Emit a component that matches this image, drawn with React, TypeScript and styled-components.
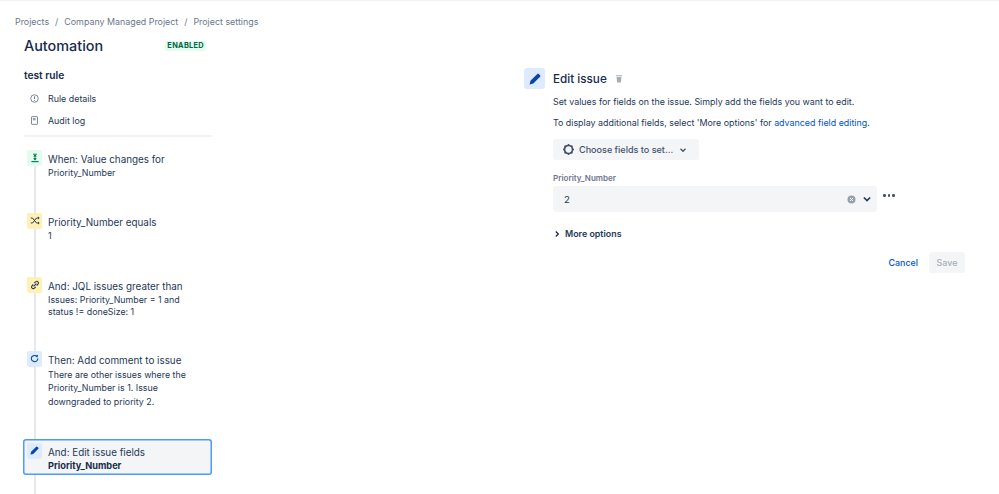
import React from "react";
import styled, { createGlobalStyle } from "styled-components";

const GlobalStyle = createGlobalStyle`
  html, body {
    margin: 0;
    padding: 0;
    background: #fff;
    font-family: Inter, "Liberation Sans", sans-serif;
    color: #253858;
  }
`;

const Page = styled.div`
  width: 999px;
  height: 494px;
  overflow: hidden;
  box-sizing: border-box;
  border-top: 1px solid #f1f2f4;
`;

const Breadcrumbs = styled.nav`
  display: flex;
  gap: 6px;
  padding: 14px 0 0 15px;
  height: 13px;
  font-size: 8.9px;
  line-height: 13px;
  color: #6b778c;
`;

const Columns = styled.div`
  display: flex;
`;

const Sidebar = styled.aside`
  width: 188px;
  margin-left: 24px;
  flex: none;
`;

const TitleRow = styled.div`
  display: flex;
  align-items: center;
  justify-content: space-between;
  width: 182px;
  height: 22px;
  margin-top: 6px;
`;

const Title = styled.h1`
  margin: 0;
  font-size: 14.4px;
  font-weight: 500;
  color: #172b4d;
`;

const Badge = styled.span`
  margin-top: 2px;
  background: #e3fcef;
  color: #006644;
  font-size: 7.4px;
  font-weight: 700;
  letter-spacing: 0.3px;
  line-height: 10px;
  padding: 0 2px;
  border-radius: 2px;
`;

const RuleName = styled.h2`
  margin: 12px 0 0;
  font-size: 10.2px;
  line-height: 14px;
  font-weight: 600;
  color: #172b4d;
`;

const NavList = styled.div`
  display: flex;
  flex-direction: column;
  gap: 8px;
  margin-top: 9px;
  padding-bottom: 8px;
  border-bottom: 2px solid #f1f2f4;
`;

const NavItem = styled.div`
  display: flex;
  align-items: center;
  gap: 9px;
  padding-left: 6px;
  height: 14px;
  font-size: 8.9px;
  color: #253858;

  svg {
    flex: none;
  }
`;

const Timeline = styled.div`
  position: relative;
  margin-top: 9px;

  &::before {
    content: "";
    position: absolute;
    left: 10px;
    top: 19px;
    height: 400px;
    width: 1.5px;
    background: #e6e8ee;
  }
`;

const Step = styled.div<{ $height: number; $selected?: boolean }>`
  position: relative;
  display: flex;
  gap: 6px;
  box-sizing: border-box;
  height: ${(p) => p.$height}px;
  margin-left: -1px;
  padding: 4px;
  border-radius: 3px;
  ${(p) =>
    p.$selected &&
    `
    background: #f4f5f7;
    box-shadow: inset 0 0 0 1.5px #4c9aff;
  `}
`;

const StepIcon = styled.span<{ $bg: string }>`
  display: flex;
  align-items: center;
  justify-content: center;
  flex: none;
  width: 15px;
  height: 15.5px;
  border-radius: 2px;
  background: ${(p) => p.$bg};
`;

const StepBody = styled.div`
  min-width: 0;
  max-width: 145px;
  padding-top: 1.5px;
`;

const StepTitle = styled.div`
  font-size: 9.85px;
  line-height: 15px;
  color: #253858;
`;

const StepText = styled.div<{ $bold?: boolean; $lh?: number }>`
  font-size: ${(p) => (p.$bold ? 9.2 : 8.85)}px;
  line-height: ${(p) => p.$lh ?? 12}px;
  font-weight: ${(p) => (p.$bold ? 700 : 400)};
  color: ${(p) => (p.$bold ? "#172b4d" : "#253858")};
`;

const Panel = styled.main`
  width: 441px;
  margin-left: 312px;
  padding-top: 40px;
  flex: none;
`;

const PanelHeader = styled.div`
  display: flex;
  align-items: center;
  height: 21px;
`;

const PanelIcon = styled.span`
  display: flex;
  align-items: center;
  justify-content: center;
  width: 21px;
  height: 21px;
  border-radius: 3px;
  background: #deebff;
  margin-right: 8px;
`;

const PanelTitle = styled.h2`
  margin: 0 8px 0 0;
  font-size: 11.7px;
  font-weight: 500;
  color: #172b4d;
`;

const PanelBody = styled.div`
  padding-left: 29px;
`;

const Help = styled.p`
  margin: 6px 0 0;
  font-size: 8.88px;
  line-height: 14px;
  color: #253858;

  & + & {
    margin-top: 7px;
  }
`;

const HelpLink = styled.a`
  color: #0052cc;
`;

const ChooseButton = styled.button`
  display: flex;
  align-items: center;
  gap: 4px;
  height: 21px;
  width: 146px;
  margin-top: 9px;
  padding: 0 0 0 9px;
  border: 0;
  border-radius: 3px;
  background: #f4f5f7;
  color: #42526e;
  font: 500 9.05px Inter, "Liberation Sans", sans-serif;
`;

const ButtonChevron = styled.span`
  display: flex;
  margin-left: 2px;
`;

const FieldLabel = styled.label`
  display: block;
  margin-top: 13px;
  font-size: 8px;
  line-height: 11px;
  font-weight: 600;
  color: #6b778c;
`;

const FieldRow = styled.div`
  display: flex;
  align-items: flex-start;
  gap: 6px;
  margin-top: 2px;
`;

const Select = styled.div`
  display: flex;
  align-items: center;
  gap: 6px;
  width: 324px;
  height: 26px;
  box-sizing: border-box;
  padding: 0 5px 0 11px;
  border-radius: 3px;
  background: #f4f5f7;
  font-size: 9.6px;
  color: #253858;
`;

const SelectValue = styled.span`
  flex: 1;
`;

const More = styled.span`
  display: flex;
  gap: 2px;
  margin-top: 8px;
`;

const Dot = styled.i`
  width: 2.6px;
  height: 2.6px;
  border-radius: 50%;
  background: #42526e;
`;

const MoreOptions = styled.div`
  display: flex;
  align-items: center;
  gap: 4px;
  margin-top: 15px;
  font-size: 8.9px;
  line-height: 13px;
  font-weight: 600;
  color: #253858;
`;

const Actions = styled.div`
  display: flex;
  align-items: center;
  justify-content: flex-end;
  gap: 11px;
  margin-top: 12px;
`;

const CancelButton = styled.button`
  border: 0;
  padding: 0;
  background: none;
  color: #0052cc;
  font: 500 8.9px Inter, "Liberation Sans", sans-serif;
`;

const SaveButton = styled.button`
  width: 36px;
  height: 21px;
  border: 0;
  padding: 0;
  border-radius: 3px;
  background: #f4f5f7;
  color: #a5adba;
  font: 500 8.9px Inter, "Liberation Sans", sans-serif;
`;

const PencilIcon = ({ size = 9 }: { size?: number }) => (
  <svg width={size} height={size} viewBox="0 0 12 12">
    <path
      fill="#0747a6"
      d="M8.3.9a1 1 0 0 1 1.4 0l1.4 1.4a1 1 0 0 1 0 1.4L4.3 10.5.6 11.4l.9-3.7z"
    />
  </svg>
);

const Chevron = ({ dir = "down", size = 8, color = "#42526e" }: { dir?: "down" | "right"; size?: number; color?: string }) => (
  <svg width={size} height={size} viewBox="0 0 8 8">
    <path
      d={dir === "down" ? "M1.5 2.8 4 5.3l2.5-2.5" : "M2.8 1.5 5.3 4 2.8 6.5"}
      fill="none"
      stroke={color}
      strokeWidth="1.3"
    />
  </svg>
);

export default function App() {
  return (
    <Page>
      <GlobalStyle />
      <Breadcrumbs>
        <span>Projects</span>
        <span>/</span>
        <span>Company Managed Project</span>
        <span>/</span>
        <span>Project settings</span>
      </Breadcrumbs>
      <Columns>
        <Sidebar>
          <TitleRow>
            <Title>Automation</Title>
            <Badge>ENABLED</Badge>
          </TitleRow>
          <RuleName>test rule</RuleName>
          <NavList>
            <NavItem>
              <svg width="9" height="9" viewBox="0 0 10 10">
                <circle cx="5" cy="5" r="4.2" fill="none" stroke="#5e6c84" strokeWidth="0.9" />
                <path d="M5 2.6v3M5 6.7v.8" stroke="#5e6c84" strokeWidth="1" />
              </svg>
              Rule details
            </NavItem>
            <NavItem>
              <svg width="9" height="9" viewBox="0 0 10 10">
                <rect x="1.7" y="0.7" width="6.6" height="8.6" rx="0.6" fill="none" stroke="#5e6c84" strokeWidth="0.9" />
                <path d="M3.2 2.2h3v2.6h-3z" fill="#97a0af" />
              </svg>
              Audit log
            </NavItem>
          </NavList>
          <Timeline>
            <Step $height={63}>
              <StepIcon $bg="#e3fcef">
                <svg width="10" height="10" viewBox="0 0 10 10">
                  <path d="M3 1.2h4M5 1.2v6" fill="none" stroke="#00875a" strokeWidth="0.9" />
                  <path d="M3.2 3.6h3.6L5 1.6zM3.2 5.2h3.6L5 7.2z" fill="#006644" />
                  <path d="M1.4 8.6h7.2" stroke="#00875a" strokeWidth="1.2" />
                </svg>
              </StepIcon>
              <StepBody>
                <StepTitle>When: Value changes for</StepTitle>
                <StepText>Priority_Number</StepText>
              </StepBody>
            </Step>
            <Step $height={64}>
              <StepIcon $bg="#fff0b3">
                <svg width="10" height="9" viewBox="0 0 10 9">
                  <path d="M.8 2h1.7l4 5h1.7M.8 7h1.7l4-5h1.7" fill="none" stroke="#253858" strokeWidth="1" />
                  <path d="M8 .6 9.6 2 8 3.4zM8 5.6 9.6 7 8 8.4z" fill="#253858" />
                </svg>
              </StepIcon>
              <StepBody>
                <StepTitle>Priority_Number equals</StepTitle>
                <StepText>1</StepText>
              </StepBody>
            </Step>
            <Step $height={74}>
              <StepIcon $bg="#fff0b3">
                <svg width="10" height="10" viewBox="0 0 10 10">
                  <path d="M4.2 3.2 5.6 1.9a1.6 1.6 0 0 1 2.4 2.3L6.7 5.5M5.8 6.8 4.4 8.1A1.6 1.6 0 0 1 2 5.8l1.3-1.3M3.6 6.4l2.8-2.8" fill="none" stroke="#253858" strokeWidth="1.1" />
                </svg>
              </StepIcon>
              <StepBody>
                <StepTitle>And: JQL issues greater than</StepTitle>
                <StepText>Issues: Priority_Number = 1 and status != doneSize: 1</StepText>
              </StepBody>
            </Step>
            <Step $height={92}>
              <StepIcon $bg="#deebff">
                <svg width="9" height="9" viewBox="0 0 10 10">
                  <path d="M8.3 3.6A3.6 3.4 0 1 0 7.9 7.2 3.6 3.4 0 0 0 8.7 5" fill="none" stroke="#0747a6" strokeWidth="1.2" />
                  <path d="M7.4 1.2h1.5v1.5H7.4z" fill="#0747a6" />
                </svg>
              </StepIcon>
              <StepBody>
                <StepTitle>Then: Add comment to issue</StepTitle>
                <StepText $lh={13.5}>There are other issues where the Priority_Number is 1. Issue downgraded to priority 2.</StepText>
              </StepBody>
            </Step>
            <Step $height={36} $selected>
              <StepIcon $bg="#deebff">
                <PencilIcon />
              </StepIcon>
              <StepBody>
                <StepTitle>And: Edit issue fields</StepTitle>
                <StepText $bold>Priority_Number</StepText>
              </StepBody>
            </Step>
          </Timeline>
        </Sidebar>
        <Panel>
          <PanelHeader>
            <PanelIcon>
              <PencilIcon size={12} />
            </PanelIcon>
            <PanelTitle>Edit issue</PanelTitle>
            <svg width="8" height="9" viewBox="0 0 9 9">
              <path d="M1 .8h7v1.2H1zM1.8 2.8h5.4l-.5 5.6a.5.5 0 0 1-.5.5H2.8a.5.5 0 0 1-.5-.5z" fill="#a5adba" />
            </svg>
          </PanelHeader>
          <PanelBody>
            <Help>Set values for fields on the issue. Simply add the fields you want to edit.</Help>
            <Help>
              To display additional fields, select 'More options' for <HelpLink>advanced field editing</HelpLink>.
            </Help>
            <ChooseButton>
              <svg width="13" height="13" viewBox="0 0 13 13">
                <circle cx="6.5" cy="6.5" r="4" fill="none" stroke="#42526e" strokeWidth="1.7" />
                <path d="M6.5 1v1.6M6.5 10.4V12M1 6.5h1.6M10.4 6.5H12M2.6 2.6l1.1 1.1M9.3 9.3l1.1 1.1M2.6 10.4l1.1-1.1M9.3 3.7l1.1-1.1" stroke="#42526e" strokeWidth="1.6" />
              </svg>
              Choose fields to set...
              <ButtonChevron>
                <Chevron />
              </ButtonChevron>
            </ChooseButton>
            <FieldLabel>Priority_Number</FieldLabel>
            <FieldRow>
              <Select>
                <SelectValue>2</SelectValue>
                <svg width="9" height="9" viewBox="0 0 9 9">
                  <circle cx="4.5" cy="4.5" r="4" fill="#97a0af" />
                  <path d="M3 3l3 3M6 3 3 6" stroke="#f4f5f7" strokeWidth="1" />
                </svg>
                <Chevron size={10} color="#253858" />
              </Select>
              <More>
                <Dot />
                <Dot />
                <Dot />
              </More>
            </FieldRow>
            <MoreOptions>
              <Chevron dir="right" color="#172b4d" />
              More options
            </MoreOptions>
            <Actions>
              <CancelButton>Cancel</CancelButton>
              <SaveButton>Save</SaveButton>
            </Actions>
          </PanelBody>
        </Panel>
      </Columns>
    </Page>
  );
}
